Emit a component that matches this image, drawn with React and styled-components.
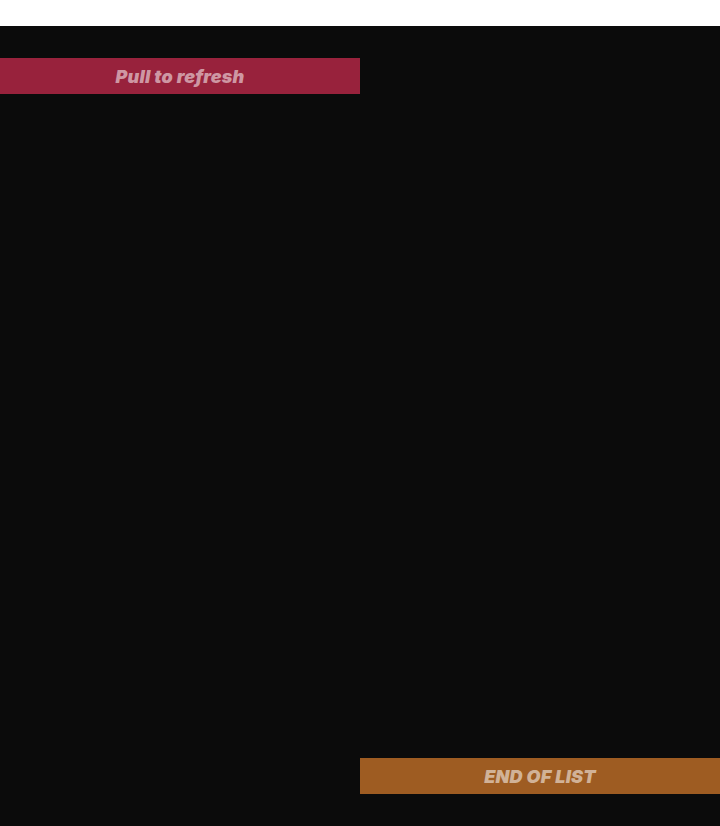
import React from 'react';
import styled, { createGlobalStyle } from 'styled-components';

const GlobalStyle = createGlobalStyle`
  html, body {
    margin: 0;
    padding: 0;
    background: #ffffff;
  }
`;

const Page = styled.div`
  padding-top: 26px;
  height: 826px;
  box-sizing: border-box;
`;

const Feed = styled.div`
  background-color: #0b0b0b;
  height: 800px;
  box-sizing: border-box;
  padding: 32px 0;
  display: flex;
  flex-direction: column;
  justify-content: space-between;
`;

const Banner = styled.div`
  width: 360px;
  height: 36px;
  align-self: ${props => (props.end ? 'flex-end' : 'flex-start')};
  background-color: ${props => props.color};
  display: flex;
  align-items: center;
  justify-content: center;
  padding-top: 1px;
  box-sizing: border-box;
  font-family: Inter, "Liberation Sans", sans-serif;
  font-weight: 900;
  font-style: italic;
  font-size: 18px;
  letter-spacing: 0.2px;
  color: rgba(255, 255, 255, 0.55);
`;

const App = () => (
  <>
    <GlobalStyle />
    <Page>
      <Feed>
        <Banner color="#98223c">Pull to refresh</Banner>
        <Banner color="#9e5c22" end>END OF LIST</Banner>
      </Feed>
    </Page>
  </>
);

export default App;
